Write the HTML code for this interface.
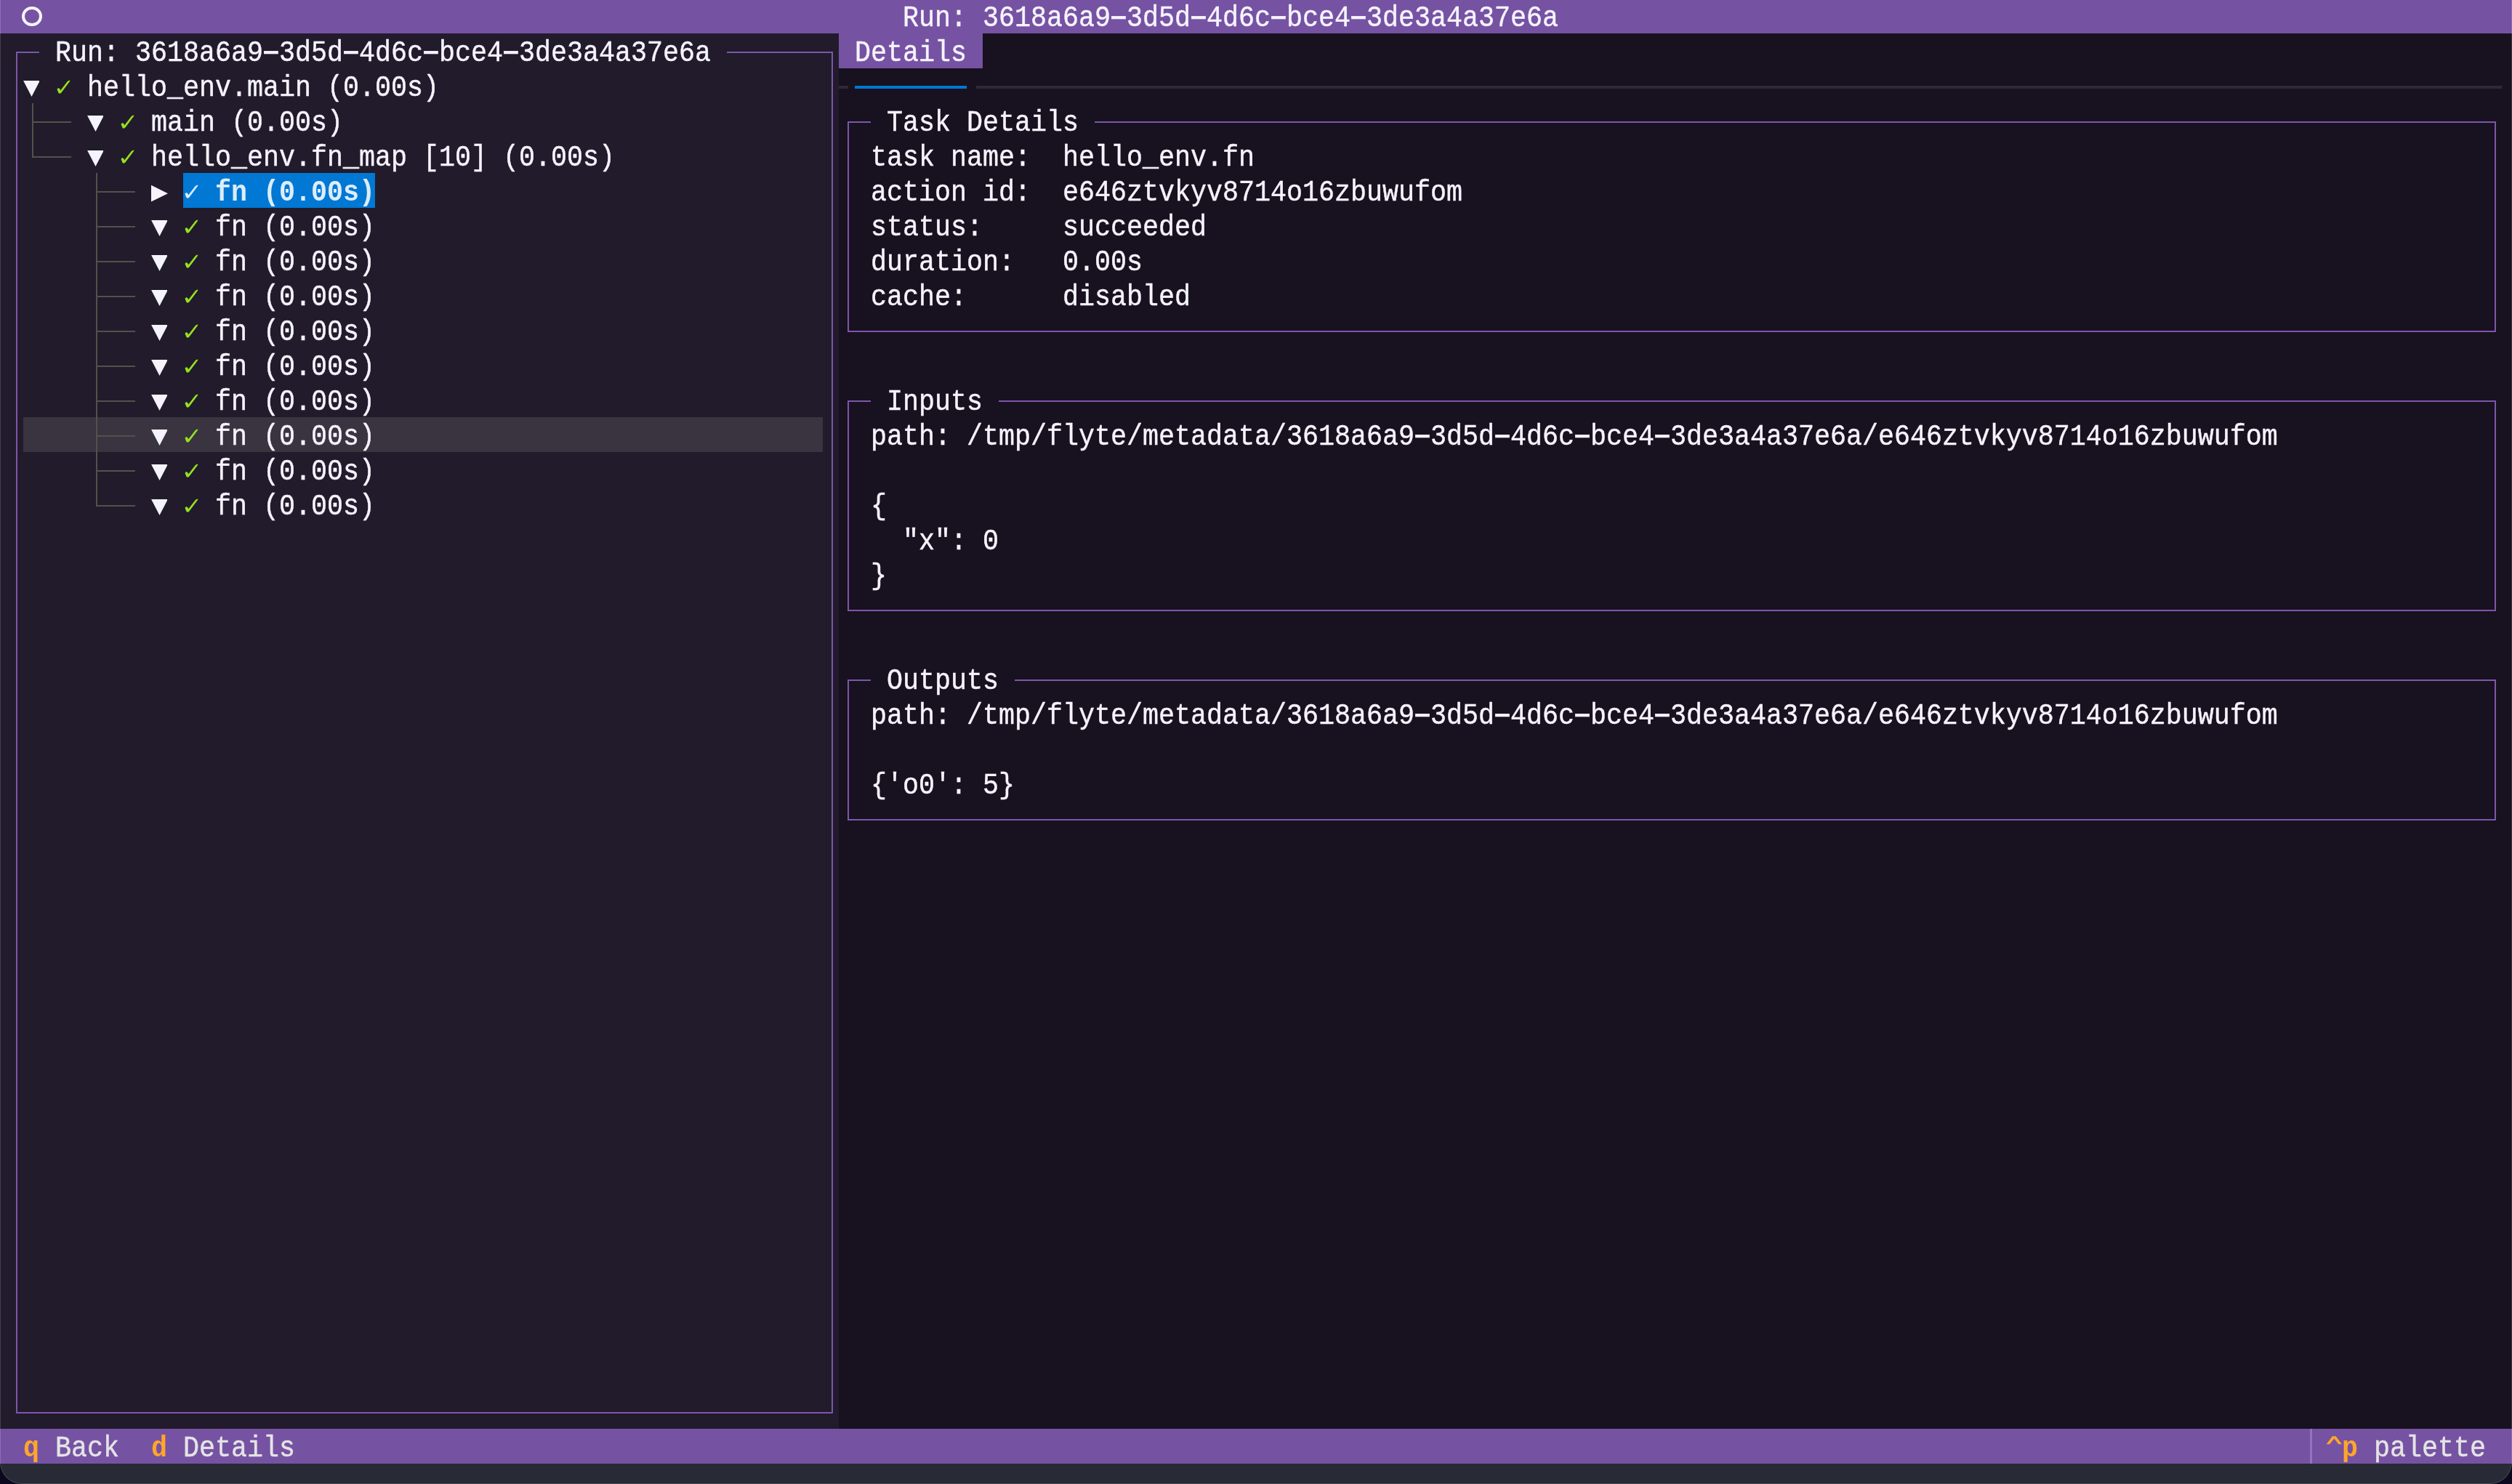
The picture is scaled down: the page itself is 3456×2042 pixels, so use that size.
<!DOCTYPE html>
<html><head><meta charset="utf-8"><style>
html,body{margin:0;padding:0;}
body{width:3456px;height:2042px;overflow:hidden;background:#0c0820;position:relative;}
#win{position:absolute;left:0;top:0;width:3456px;height:2042px;background:#282a35;border-radius:0 0 30px 30px;overflow:hidden;}
#edge{position:absolute;left:0;top:0;width:3454px;height:2041px;border:1px solid rgba(255,255,255,0.16);border-top:none;border-radius:0 0 30px 30px;}
#win div,#win svg{position:absolute;}
.d{display:inline-block;transform:translateY(-1.6px) scale(1.22,1.35);}
.t{font-family:"Liberation Mono",monospace;font-size:36.66px;line-height:48px;white-space:pre;transform-origin:0 33.76px;transform:scaleY(1.09);will-change:transform;-webkit-text-stroke:0.4px currentColor;}
</style></head><body><div id="win">
<div style="left:0px;top:0px;width:3456px;height:46px;background:#7652a3;"></div>
<div style="left:0px;top:46px;width:1154px;height:1920px;background:#211b2b;"></div>
<div style="left:1154px;top:46px;width:2302px;height:1920px;background:#18111f;"></div>
<div style="left:0px;top:1966px;width:3456px;height:48px;background:#7652a3;"></div>
<div style="left:30.3px;top:9px;width:19.599999999999998px;height:19.4px;border:4.4px solid #f5f3fc;border-radius:50%;"></div>
<div class="t" style="left:1242px;top:2.24px;color:#f5f3fc;">Run: 3618a6a9<span class=d>–</span>3d5d<span class=d>–</span>4d6c<span class=d>–</span>bce4<span class=d>–</span>3de3a4a37e6a</div>
<div style="left:22px;top:71px;width:2px;height:1874px;background:#7d56ac;"></div>
<div style="left:1144px;top:71px;width:2px;height:1874px;background:#7d56ac;"></div>
<div style="left:22px;top:71px;width:32px;height:2px;background:#7d56ac;"></div>
<div style="left:1000px;top:71px;width:146px;height:2px;background:#7d56ac;"></div>
<div style="left:22px;top:1943px;width:1124px;height:2px;background:#7d56ac;"></div>
<div class="t" style="left:76px;top:50.24px;color:#f5f3fc;">Run: 3618a6a9<span class=d>–</span>3d5d<span class=d>–</span>4d6c<span class=d>–</span>bce4<span class=d>–</span>3de3a4a37e6a</div>
<div style="left:32px;top:574px;width:1100px;height:48px;background:#3a3340;"></div>
<div style="left:252px;top:238px;width:264px;height:48px;background:#0178d4;"></div>
<svg style="left:32px;top:94px" width="22" height="48"><path d="M0.1,17 L22.9,17 L11.5,39.1 Z" fill="#f5f3fc"/></svg>
<svg style="left:76px;top:94px" width="24" height="48"><path d="M2.6,29.2 C2.6,27.4 4.6,26.5 5.9,27.7 L7.3,30.2 L16.0,19.0 C17.0,17.6 18.6,16.9 20.4,16.6 L20.0,17.9 L8.4,33.6 C7.4,35.1 5.2,35.2 4.3,33.6 Z" fill="#94e01e"/></svg>
<div class="t" style="left:120px;top:98.24px;color:#f5f3fc;">hello_env.main (0.00s)</div>
<div style="left:44px;top:142px;width:2px;height:75px;background:#52524c;"></div>
<div style="left:44px;top:167px;width:54px;height:2px;background:#52524c;"></div>
<svg style="left:120px;top:142px" width="22" height="48"><path d="M0.1,17 L22.9,17 L11.5,39.1 Z" fill="#f5f3fc"/></svg>
<svg style="left:164px;top:142px" width="24" height="48"><path d="M2.6,29.2 C2.6,27.4 4.6,26.5 5.9,27.7 L7.3,30.2 L16.0,19.0 C17.0,17.6 18.6,16.9 20.4,16.6 L20.0,17.9 L8.4,33.6 C7.4,35.1 5.2,35.2 4.3,33.6 Z" fill="#94e01e"/></svg>
<div class="t" style="left:208px;top:146.24px;color:#f5f3fc;">main (0.00s)</div>
<div style="left:44px;top:215px;width:54px;height:2px;background:#52524c;"></div>
<svg style="left:120px;top:190px" width="22" height="48"><path d="M0.1,17 L22.9,17 L11.5,39.1 Z" fill="#f5f3fc"/></svg>
<svg style="left:164px;top:190px" width="24" height="48"><path d="M2.6,29.2 C2.6,27.4 4.6,26.5 5.9,27.7 L7.3,30.2 L16.0,19.0 C17.0,17.6 18.6,16.9 20.4,16.6 L20.0,17.9 L8.4,33.6 C7.4,35.1 5.2,35.2 4.3,33.6 Z" fill="#94e01e"/></svg>
<div class="t" style="left:208px;top:194.24px;color:#f5f3fc;">hello_env.fn_map [10] (0.00s)</div>
<div style="left:132px;top:238px;width:2px;height:459px;background:#52524c;"></div>
<div style="left:132px;top:263px;width:54px;height:2px;background:#52524c;"></div>
<svg style="left:208px;top:238px" width="24" height="48"><path d="M0,16.8 L23,28.2 L0,39.6 Z" fill="#f5f3fc"/></svg>
<svg style="left:252px;top:238px" width="24" height="48"><path d="M2.6,29.2 C2.6,27.4 4.6,26.5 5.9,27.7 L7.3,30.2 L16.0,19.0 C17.0,17.6 18.6,16.9 20.4,16.6 L20.0,17.9 L8.4,33.6 C7.4,35.1 5.2,35.2 4.3,33.6 Z" fill="#dcedfb"/></svg>
<div class="t" style="left:296px;top:242.24px;color:#dcedfb;font-weight:bold;-webkit-text-stroke:0;">fn (0.00s)</div>
<div style="left:132px;top:311px;width:54px;height:2px;background:#52524c;"></div>
<svg style="left:208px;top:286px" width="22" height="48"><path d="M0.1,17 L22.9,17 L11.5,39.1 Z" fill="#f5f3fc"/></svg>
<svg style="left:252px;top:286px" width="24" height="48"><path d="M2.6,29.2 C2.6,27.4 4.6,26.5 5.9,27.7 L7.3,30.2 L16.0,19.0 C17.0,17.6 18.6,16.9 20.4,16.6 L20.0,17.9 L8.4,33.6 C7.4,35.1 5.2,35.2 4.3,33.6 Z" fill="#94e01e"/></svg>
<div class="t" style="left:296px;top:290.24px;color:#f5f3fc;">fn (0.00s)</div>
<div style="left:132px;top:359px;width:54px;height:2px;background:#52524c;"></div>
<svg style="left:208px;top:334px" width="22" height="48"><path d="M0.1,17 L22.9,17 L11.5,39.1 Z" fill="#f5f3fc"/></svg>
<svg style="left:252px;top:334px" width="24" height="48"><path d="M2.6,29.2 C2.6,27.4 4.6,26.5 5.9,27.7 L7.3,30.2 L16.0,19.0 C17.0,17.6 18.6,16.9 20.4,16.6 L20.0,17.9 L8.4,33.6 C7.4,35.1 5.2,35.2 4.3,33.6 Z" fill="#94e01e"/></svg>
<div class="t" style="left:296px;top:338.24px;color:#f5f3fc;">fn (0.00s)</div>
<div style="left:132px;top:407px;width:54px;height:2px;background:#52524c;"></div>
<svg style="left:208px;top:382px" width="22" height="48"><path d="M0.1,17 L22.9,17 L11.5,39.1 Z" fill="#f5f3fc"/></svg>
<svg style="left:252px;top:382px" width="24" height="48"><path d="M2.6,29.2 C2.6,27.4 4.6,26.5 5.9,27.7 L7.3,30.2 L16.0,19.0 C17.0,17.6 18.6,16.9 20.4,16.6 L20.0,17.9 L8.4,33.6 C7.4,35.1 5.2,35.2 4.3,33.6 Z" fill="#94e01e"/></svg>
<div class="t" style="left:296px;top:386.24px;color:#f5f3fc;">fn (0.00s)</div>
<div style="left:132px;top:455px;width:54px;height:2px;background:#52524c;"></div>
<svg style="left:208px;top:430px" width="22" height="48"><path d="M0.1,17 L22.9,17 L11.5,39.1 Z" fill="#f5f3fc"/></svg>
<svg style="left:252px;top:430px" width="24" height="48"><path d="M2.6,29.2 C2.6,27.4 4.6,26.5 5.9,27.7 L7.3,30.2 L16.0,19.0 C17.0,17.6 18.6,16.9 20.4,16.6 L20.0,17.9 L8.4,33.6 C7.4,35.1 5.2,35.2 4.3,33.6 Z" fill="#94e01e"/></svg>
<div class="t" style="left:296px;top:434.24px;color:#f5f3fc;">fn (0.00s)</div>
<div style="left:132px;top:503px;width:54px;height:2px;background:#52524c;"></div>
<svg style="left:208px;top:478px" width="22" height="48"><path d="M0.1,17 L22.9,17 L11.5,39.1 Z" fill="#f5f3fc"/></svg>
<svg style="left:252px;top:478px" width="24" height="48"><path d="M2.6,29.2 C2.6,27.4 4.6,26.5 5.9,27.7 L7.3,30.2 L16.0,19.0 C17.0,17.6 18.6,16.9 20.4,16.6 L20.0,17.9 L8.4,33.6 C7.4,35.1 5.2,35.2 4.3,33.6 Z" fill="#94e01e"/></svg>
<div class="t" style="left:296px;top:482.24px;color:#f5f3fc;">fn (0.00s)</div>
<div style="left:132px;top:551px;width:54px;height:2px;background:#52524c;"></div>
<svg style="left:208px;top:526px" width="22" height="48"><path d="M0.1,17 L22.9,17 L11.5,39.1 Z" fill="#f5f3fc"/></svg>
<svg style="left:252px;top:526px" width="24" height="48"><path d="M2.6,29.2 C2.6,27.4 4.6,26.5 5.9,27.7 L7.3,30.2 L16.0,19.0 C17.0,17.6 18.6,16.9 20.4,16.6 L20.0,17.9 L8.4,33.6 C7.4,35.1 5.2,35.2 4.3,33.6 Z" fill="#94e01e"/></svg>
<div class="t" style="left:296px;top:530.24px;color:#f5f3fc;">fn (0.00s)</div>
<div style="left:132px;top:599px;width:54px;height:2px;background:#52524c;"></div>
<svg style="left:208px;top:574px" width="22" height="48"><path d="M0.1,17 L22.9,17 L11.5,39.1 Z" fill="#f5f3fc"/></svg>
<svg style="left:252px;top:574px" width="24" height="48"><path d="M2.6,29.2 C2.6,27.4 4.6,26.5 5.9,27.7 L7.3,30.2 L16.0,19.0 C17.0,17.6 18.6,16.9 20.4,16.6 L20.0,17.9 L8.4,33.6 C7.4,35.1 5.2,35.2 4.3,33.6 Z" fill="#94e01e"/></svg>
<div class="t" style="left:296px;top:578.24px;color:#f5f3fc;">fn (0.00s)</div>
<div style="left:132px;top:647px;width:54px;height:2px;background:#52524c;"></div>
<svg style="left:208px;top:622px" width="22" height="48"><path d="M0.1,17 L22.9,17 L11.5,39.1 Z" fill="#f5f3fc"/></svg>
<svg style="left:252px;top:622px" width="24" height="48"><path d="M2.6,29.2 C2.6,27.4 4.6,26.5 5.9,27.7 L7.3,30.2 L16.0,19.0 C17.0,17.6 18.6,16.9 20.4,16.6 L20.0,17.9 L8.4,33.6 C7.4,35.1 5.2,35.2 4.3,33.6 Z" fill="#94e01e"/></svg>
<div class="t" style="left:296px;top:626.24px;color:#f5f3fc;">fn (0.00s)</div>
<div style="left:132px;top:695px;width:54px;height:2px;background:#52524c;"></div>
<svg style="left:208px;top:670px" width="22" height="48"><path d="M0.1,17 L22.9,17 L11.5,39.1 Z" fill="#f5f3fc"/></svg>
<svg style="left:252px;top:670px" width="24" height="48"><path d="M2.6,29.2 C2.6,27.4 4.6,26.5 5.9,27.7 L7.3,30.2 L16.0,19.0 C17.0,17.6 18.6,16.9 20.4,16.6 L20.0,17.9 L8.4,33.6 C7.4,35.1 5.2,35.2 4.3,33.6 Z" fill="#94e01e"/></svg>
<div class="t" style="left:296px;top:674.24px;color:#f5f3fc;">fn (0.00s)</div>
<div style="left:1154px;top:46px;width:198px;height:48px;background:#7652a3;"></div>
<div class="t" style="left:1176px;top:50.24px;color:#f5f3fc;">Details</div>
<div style="left:1154px;top:118px;width:13px;height:4px;background:#2e2838;"></div>
<div style="left:1176px;top:118px;width:154px;height:4px;background:#0178d4;"></div>
<div style="left:1343px;top:118px;width:2099px;height:4px;background:#2e2838;"></div>
<div style="left:1166px;top:167px;width:2px;height:290px;background:#7d56ac;"></div>
<div style="left:3432px;top:167px;width:2px;height:290px;background:#7d56ac;"></div>
<div style="left:1166px;top:167px;width:32px;height:2px;background:#7d56ac;"></div>
<div style="left:1506px;top:167px;width:1928px;height:2px;background:#7d56ac;"></div>
<div style="left:1166px;top:455px;width:2268px;height:2px;background:#7d56ac;"></div>
<div class="t" style="left:1220px;top:146.24px;color:#f5f3fc;">Task Details</div>
<div class="t" style="left:1198px;top:194.24px;color:#f5f3fc;">task name:  hello_env.fn</div>
<div class="t" style="left:1198px;top:242.24px;color:#f5f3fc;">action id:  e646ztvkyv8714o16zbuwufom</div>
<div class="t" style="left:1198px;top:290.24px;color:#f5f3fc;">status:     succeeded</div>
<div class="t" style="left:1198px;top:338.24px;color:#f5f3fc;">duration:   0.00s</div>
<div class="t" style="left:1198px;top:386.24px;color:#f5f3fc;">cache:      disabled</div>
<div style="left:1166px;top:551px;width:2px;height:290px;background:#7d56ac;"></div>
<div style="left:3432px;top:551px;width:2px;height:290px;background:#7d56ac;"></div>
<div style="left:1166px;top:551px;width:32px;height:2px;background:#7d56ac;"></div>
<div style="left:1374px;top:551px;width:2060px;height:2px;background:#7d56ac;"></div>
<div style="left:1166px;top:839px;width:2268px;height:2px;background:#7d56ac;"></div>
<div class="t" style="left:1220px;top:530.24px;color:#f5f3fc;">Inputs</div>
<div class="t" style="left:1198px;top:578.24px;color:#f5f3fc;">path: /tmp/flyte/metadata/3618a6a9<span class=d>–</span>3d5d<span class=d>–</span>4d6c<span class=d>–</span>bce4<span class=d>–</span>3de3a4a37e6a/e646ztvkyv8714o16zbuwufom</div>
<div class="t" style="left:1198px;top:674.24px;color:#f5f3fc;">{</div>
<div class="t" style="left:1198px;top:722.24px;color:#f5f3fc;">  &quot;x&quot;: 0</div>
<div class="t" style="left:1198px;top:770.24px;color:#f5f3fc;">}</div>
<div style="left:1166px;top:935px;width:2px;height:194px;background:#7d56ac;"></div>
<div style="left:3432px;top:935px;width:2px;height:194px;background:#7d56ac;"></div>
<div style="left:1166px;top:935px;width:32px;height:2px;background:#7d56ac;"></div>
<div style="left:1396px;top:935px;width:2038px;height:2px;background:#7d56ac;"></div>
<div style="left:1166px;top:1127px;width:2268px;height:2px;background:#7d56ac;"></div>
<div class="t" style="left:1220px;top:914.24px;color:#f5f3fc;">Outputs</div>
<div class="t" style="left:1198px;top:962.24px;color:#f5f3fc;">path: /tmp/flyte/metadata/3618a6a9<span class=d>–</span>3d5d<span class=d>–</span>4d6c<span class=d>–</span>bce4<span class=d>–</span>3de3a4a37e6a/e646ztvkyv8714o16zbuwufom</div>
<div class="t" style="left:1198px;top:1058.24px;color:#f5f3fc;">{&#x27;o0&#x27;: 5}</div>
<div class="t" style="left:32px;top:1970.24px;color:#ffa62b;font-weight:bold;-webkit-text-stroke:0;">q</div>
<div class="t" style="left:76px;top:1970.24px;color:#e4e4e4;">Back</div>
<div class="t" style="left:208px;top:1970.24px;color:#ffa62b;font-weight:bold;-webkit-text-stroke:0;">d</div>
<div class="t" style="left:252px;top:1970.24px;color:#e4e4e4;">Details</div>
<div style="left:3178px;top:1966px;width:3px;height:48px;background:#9274bd;"></div>
<svg style="left:3200px;top:1966px" width="24" height="48"><path d="M0.6,21.2 L9.0,10.2 L13.6,10.2 L22.0,21.2 L17.4,21.2 L11.3,13.4 L5.2,21.2 Z" fill="#ffa62b"/></svg>
<div class="t" style="left:3222px;top:1970.24px;color:#ffa62b;font-weight:bold;-webkit-text-stroke:0;">p</div>
<div class="t" style="left:3266px;top:1970.24px;color:#e4e4e4;">palette</div>
<div id="edge"></div>
</div></body></html>
